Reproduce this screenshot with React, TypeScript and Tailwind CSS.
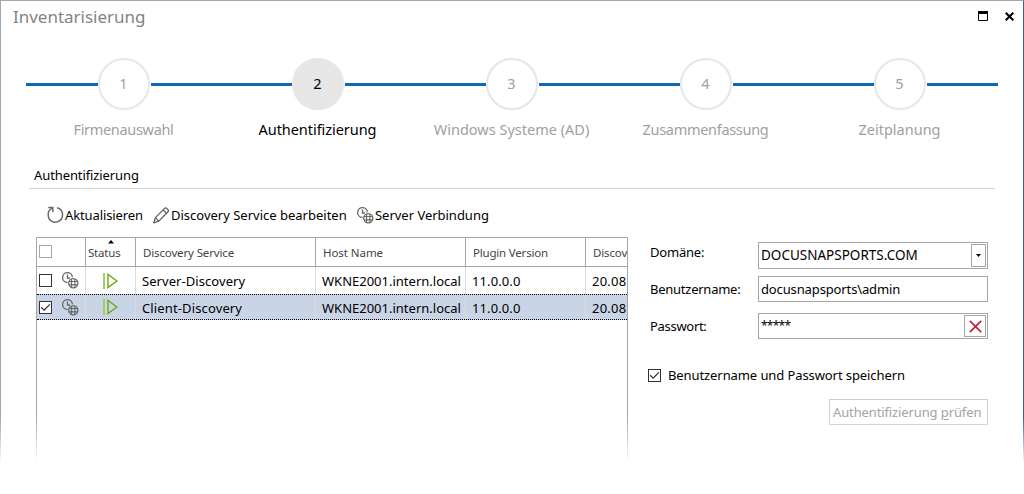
import type { ReactNode } from "react";

function RefreshIcon() {
  return (
    <svg width="18" height="18" viewBox="0 0 18 18" fill="none" stroke="#6a6a6a" strokeWidth="1.5">
      <path d="M11 1.8A7.3 7.3 0 0 1 11.6 15.8L8.2 16.2A7.5 7.5 0 0 1 6.2 2.2" />
      <path d="M2.2 1.5H6.8V6" />
    </svg>
  );
}

function PencilIcon() {
  return (
    <svg width="17" height="17" viewBox="0 0 17 17" fill="none" stroke="#606060" strokeWidth="1.3" strokeLinejoin="round">
      <path d="M.8 15.8l1.6-5.2L11.6 1.4a1.5 1.5 0 0 1 2.1 0l1.3 1.3a1.5 1.5 0 0 1 0 2.1L5.8 14.1z" />
      <path d="M2.4 10.6l3.4 3.5M10.2 3l3.4 3.4" />
    </svg>
  );
}

function ClockGlobeIcon() {
  return (
    <svg width="17" height="17" viewBox="0 0 17 17" fill="none" stroke="#666">
      <path d="M5.6 10.4A4.9 4.9 0 1 1 10.4 5.2" strokeWidth="1.3" />
      <path d="M5.5 2.5V6H8" strokeWidth="1.3" />
      <circle cx="11.3" cy="11.3" r="4.6" strokeWidth="1.3" />
      <path d="M7 9.5h8.6M7 12.9h8.6" strokeWidth="1.1" />
      <path d="M9.6 7v8.6M12.9 7v8.6" strokeWidth="1.1" />
    </svg>
  );
}

function PlayIcon() {
  return (
    <svg width="16" height="16" viewBox="0 0 16 16" fill="none">
      <path d="M1 0V16" stroke="#9fce6a" strokeWidth="2" />
      <path d="M5 1.4V14.6L13.9 8Z" stroke="#6fac14" strokeWidth="1.4" />
    </svg>
  );
}

function Box({ checked = false, muted = false }: { checked?: boolean; muted?: boolean }) {
  return (
    <span className={`block size-[13px] shrink-0 border bg-white ${muted ? "border-[#a6a6a6]" : "border-[#333]"}`}>
      {checked && (
        <svg width="11" height="11" viewBox="0 0 11 11" fill="none" stroke="#333" strokeWidth="1.3">
          <path d="M1.2 5.3L4.2 8.2L9.8 2.4" />
        </svg>
      )}
    </span>
  );
}

const steps = [
  { label: "Firmenauswahl", tracking: "tracking-[-0.32px]" },
  { label: "Authentifizierung", tracking: "tracking-[-0.05px]", active: true },
  { label: "Windows Systeme (AD)", tracking: "tracking-[0px]" },
  { label: "Zusammenfassung", tracking: "tracking-[-0.3px]" },
  { label: "Zeitplanung", tracking: "tracking-[0px]" },
];

function Stepper() {
  return (
    <div className="ml-[26px] mt-[26px] grid w-[970px] grid-cols-5">
      {steps.map((s, i) => (
        <div key={s.label}>
          <div className="flex h-[52px] items-center">
            <div className={`mt-px h-[3px] flex-1 bg-[#0f67b5] ${i === 0 ? "-ml-px" : ""}`} />
            <div
              className={`mr-px flex size-[52px] items-center justify-center rounded-full border-2 border-[#e6e6e6] pb-0.5 pr-px text-[14.5px] leading-5 ${
                s.active ? "bg-[#e6e6e6] text-black" : "bg-white text-[#a0a0a0]"
              }`}
            >
              {i + 1}
            </div>
            <div className={`mt-px h-[3px] bg-[#0f67b5] ${i === 4 ? "-mr-px w-[71px]" : "w-[70px]"}`} />
          </div>
          <div className={`mt-[9px] whitespace-nowrap pr-px text-center text-[14.5px] leading-[21px] ${s.tracking} ${s.active ? "text-black" : "text-[#a0a0a0]"}`}>
            {s.label}
          </div>
        </div>
      ))}
    </div>
  );
}

const columns = "grid grid-cols-[49px_50px_180px_150px_120px_41px]";

function HeadCell({ children, className = "" }: { children: ReactNode; className?: string }) {
  return <div className={`flex items-center overflow-hidden whitespace-nowrap border-r border-[#a6a6a6] pl-[7px] pt-px text-[11.5px] text-[#444] ${className}`}>{children}</div>;
}

function Cell({ children, className = "" }: { children: ReactNode; className?: string }) {
  return <div className={`flex items-center overflow-hidden whitespace-nowrap border-r border-[#dcdcdc] ${className}`}>{children}</div>;
}

function Row({ name, tracking, selected = false }: { name: string; tracking: string; selected?: boolean }) {
  const pad = selected ? "pl-1.5 pt-[3px]" : "pl-1.5 pt-0.5";
  return (
    <div className={`${columns} ${selected ? "h-[26px] border-y border-dotted border-black bg-[#c9d5e6]" : "h-[27px]"}`}>
      <div className="flex items-center gap-[10px] border-r border-[#dcdcdc] pl-0.5">
        <Box checked={selected} />
        <ClockGlobeIcon />
      </div>
      <Cell className="pl-[17px]"><PlayIcon /></Cell>
      <Cell className={`${pad} ${tracking}`}>{name}</Cell>
      <Cell className={pad}>WKNE2001.intern.local</Cell>
      <Cell className={`${pad} tracking-[0.1px]`}>11.0.0.0</Cell>
      <div className={`flex items-center overflow-hidden tracking-[0.25px] ${pad}`}>20.08</div>
    </div>
  );
}

function ServiceTable() {
  return (
    <div className="h-[257px] w-[592px] border border-b-0 border-[#a6a6a6]">
      <div className={`${columns} h-[29px] border-b border-[#a6a6a6]`}>
        <div className="flex items-center border-r border-[#a6a6a6] pl-0.5 pb-px"><Box muted /></div>
        <HeadCell className="relative pl-[2px]! tracking-[-0.2px]">
          <svg className="absolute left-[22px] top-0.5" width="6" height="4" viewBox="0 0 6 4"><path d="M0 3.5L3 0L6 3.5Z" fill="#000" /></svg>
          Status
        </HeadCell>
        <HeadCell className="tracking-[-0.14px]">Discovery Service</HeadCell>
        <HeadCell className="tracking-[-0.06px]">Host Name</HeadCell>
        <HeadCell className="tracking-[-0.19px]">Plugin Version</HeadCell>
        <HeadCell className="border-r-0 tracking-[-0.14px]">Discov</HeadCell>
      </div>
      <Row name="Server-Discovery" tracking="tracking-[0.06px]" />
      <Row name="Client-Discovery" tracking="tracking-[0.13px]" selected />
    </div>
  );
}

function LoginForm() {
  return (
    <div className="ml-[22px] w-[338px] pt-[5px]">
      <div className="flex h-[27px]">
        <div className="w-[108px] leading-5 tracking-[-0.2px]">Domäne:</div>
        <div className="flex w-[230px] justify-between border border-[#a6a6a6] bg-white p-px">
          <span className="pl-[1px] text-[13.5px] leading-[22px]">DOCUSNAPSPORTS.COM</span>
          <span className="flex w-[15px] items-center justify-center border border-[#a6a6a6]">
            <svg width="5" height="3" viewBox="0 0 5 3"><path d="M0 0H5L2.5 3Z" fill="#000" /></svg>
          </span>
        </div>
      </div>
      <div className="mt-[7px] flex h-[26px]">
        <div className="w-[108px] leading-[26px] tracking-[-0.25px]">Benutzername:</div>
        <div className="w-[230px] border border-[#a6a6a6] bg-white pl-0.5 leading-6 tracking-[-0.13px]">docusnapsports\admin</div>
      </div>
      <div className="mt-[11px] flex h-[26px]">
        <div className="w-[108px] leading-[26px] tracking-[-0.3px]">Passwort:</div>
        <div className="flex w-[230px] justify-between border border-[#a6a6a6] bg-white p-px">
          <span className="pl-px text-[12px] leading-[21px] tracking-[-0.75px]">*****</span>
          <span className="flex w-[22px] items-center justify-center border border-[#a6a6a6]">
            <svg width="13" height="13" viewBox="0 0 13 13" stroke="#c0272d" strokeWidth="1.7"><path d="M.8 .8L12.2 12.2M12.2 .8L.8 12.2" /></svg>
          </span>
        </div>
      </div>
      <div className="-ml-0.5 mt-[26px] flex h-5 items-center tracking-[-0.09px]">
        <Box checked />
        <span className="pl-[7px] leading-5">Benutzername und Passwort speichern</span>
      </div>
      <div className="ml-auto mt-3.5 h-[26px] w-[159px] whitespace-nowrap border border-[#cfcfcf] bg-white pl-[3px] leading-6 tracking-[-0.12px] text-[#a3a3a3]">
        Authentifizierung <span className="underline underline-offset-2">p</span>rüfen
      </div>
    </div>
  );
}

export default function App() {
  return (
    <div className="relative h-[494px] w-[1024px] overflow-hidden bg-white font-['Noto_Sans','Segoe_UI',sans-serif] text-[13px] text-black">
      <div className="h-full border-l border-r border-t border-[#a6a6a6] border-r-[#3b6496]">
        <header className="flex h-[31px] items-center justify-between pl-3 pr-[9px]">
          <h1 className="text-[17px] leading-6 tracking-[-0.02px] text-[#838383]">Inventarisierung</h1>
          <div className="flex items-center gap-[17px] pb-px">
            <svg width="10" height="10" viewBox="0 0 10 10"><path d="M.5 .5H9.5V9.5H.5Z" fill="none" stroke="#000" /><path d="M0 0H10V3H0Z" /></svg>
            <svg width="9" height="9" viewBox="0 0 9 9" stroke="#000" strokeWidth="2"><path d="M.7 .7L8.3 8.3M8.3 .7L.7 8.3" /></svg>
          </div>
        </header>
        <Stepper />
        <h2 className="ml-7 mt-[25px] h-6 w-[966px] border-b border-[#d4d4d4] pl-[5px] leading-5 tracking-[-0.1px]">Authentifizierung</h2>
        <div className="ml-[45px] mt-4 flex h-5 items-center">
          <RefreshIcon />
          <span className="w-[89px] pl-px leading-5 tracking-[-0.12px]">Aktualisieren</span>
          <PencilIcon />
          <span className="w-[187px] whitespace-nowrap pl-px leading-5 tracking-[0px]">Discovery Service bearbeiten</span>
          <ClockGlobeIcon />
          <span className="pl-px leading-5 tracking-[-0.02px]">Server Verbindung</span>
        </div>
        <main className="ml-[35px] mt-3 flex">
          <ServiceTable />
          <LoginForm />
        </main>
      </div>
      <div className="pointer-events-none absolute inset-x-0 bottom-0 h-[76px] bg-linear-to-b from-white/0 to-white to-60%" />
    </div>
  );
}
